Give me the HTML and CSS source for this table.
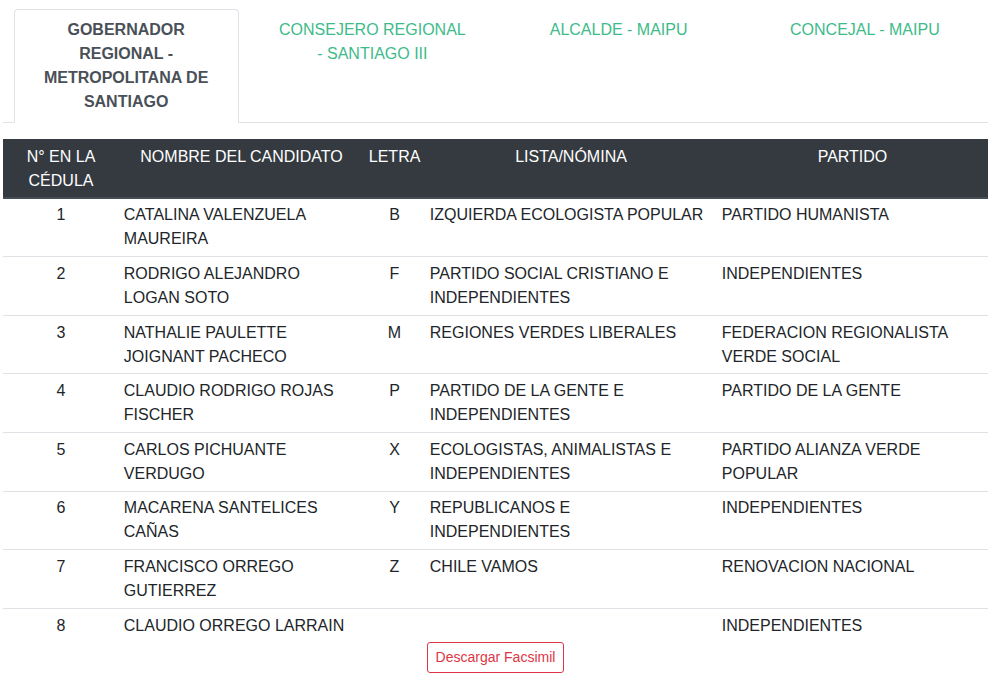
FILE: index.html
```html
<!DOCTYPE html>
<html lang="es">
<head>
<meta charset="utf-8">
<title>Candidatos</title>
<link rel="stylesheet" href="styles.css">
</head>
<body>
<div class="wrap">
  <ul class="tabs">
    <li class="tab-item"><a class="tab active">GOBERNADOR REGIONAL - METROPOLITANA DE SANTIAGO</a></li>
    <li class="tab-item"><a class="tab">CONSEJERO REGIONAL - SANTIAGO III</a></li>
    <li class="tab-item"><a class="tab">ALCALDE - MAIPU</a></li>
    <li class="tab-item"><a class="tab">CONCEJAL - MAIPU</a></li>
  </ul>
  <div class="content">
    <table class="grid">
      <colgroup>
        <col class="c1"><col class="c2"><col class="c3"><col class="c4"><col class="c5">
      </colgroup>
      <thead>
        <tr>
          <th>N° EN LA CÉDULA</th>
          <th>NOMBRE DEL CANDIDATO</th>
          <th>LETRA</th>
          <th>LISTA/NÓMINA</th>
          <th>PARTIDO</th>
        </tr>
      </thead>
      <tbody>
        <tr><td class="center">1</td><td>CATALINA VALENZUELA MAUREIRA</td><td class="center">B</td><td>IZQUIERDA ECOLOGISTA POPULAR</td><td>PARTIDO HUMANISTA</td></tr>
        <tr><td class="center">2</td><td>RODRIGO ALEJANDRO LOGAN SOTO</td><td class="center">F</td><td>PARTIDO SOCIAL CRISTIANO E INDEPENDIENTES</td><td>INDEPENDIENTES</td></tr>
        <tr><td class="center">3</td><td>NATHALIE PAULETTE JOIGNANT PACHECO</td><td class="center">M</td><td>REGIONES VERDES LIBERALES</td><td>FEDERACION REGIONALISTA VERDE SOCIAL</td></tr>
        <tr><td class="center">4</td><td>CLAUDIO RODRIGO ROJAS FISCHER</td><td class="center">P</td><td>PARTIDO DE LA GENTE E INDEPENDIENTES</td><td>PARTIDO DE LA GENTE</td></tr>
        <tr><td class="center">5</td><td>CARLOS PICHUANTE VERDUGO</td><td class="center">X</td><td>ECOLOGISTAS, ANIMALISTAS E INDEPENDIENTES</td><td>PARTIDO ALIANZA VERDE POPULAR</td></tr>
        <tr><td class="center">6</td><td>MACARENA SANTELICES CAÑAS</td><td class="center">Y</td><td>REPUBLICANOS E INDEPENDIENTES</td><td>INDEPENDIENTES</td></tr>
        <tr><td class="center">7</td><td>FRANCISCO ORREGO GUTIERREZ</td><td class="center">Z</td><td>CHILE VAMOS</td><td>RENOVACION NACIONAL</td></tr>
        <tr><td class="center">8</td><td>CLAUDIO ORREGO LARRAIN</td><td class="center"></td><td></td><td>INDEPENDIENTES</td></tr>
      </tbody>
    </table>
    <div class="actions">
      <button class="btn-outline" type="button">Descargar Facsimil</button>
    </div>
  </div>
</div>
</body>
</html>
```

FILE: styles.css
```css
* { box-sizing: border-box; }

html, body {
  margin: 0;
  padding: 0;
  background: #fff;
}

body {
  font-family: "Liberation Sans", Arial, sans-serif;
  font-size: 16px;
  line-height: 24px;
  color: #212529;
}

.wrap {
  width: 985px;
  margin-left: 3px;
  padding-top: 9px;
}

.tabs {
  list-style: none;
  margin: 0;
  padding: 0;
  display: flex;
  border-bottom: 1px solid #dee2e6;
}

.tab-item {
  flex: 1 1 0;
  display: flex;
  justify-content: center;
  margin-bottom: -1px;
}

.tab {
  display: block;
  width: 225px;
  padding: 8px 16px;
  text-align: center;
  color: #3dbb8a;
  border: 1px solid transparent;
  border-top-left-radius: 4px;
  border-top-right-radius: 4px;
  cursor: pointer;
}

.tab.active {
  color: #495057;
  font-weight: bold;
  background: #fff;
  border-color: #dee2e6 #dee2e6 #fff;
}

.content {
  padding-top: 16px;
}

.grid {
  width: 100%;
  table-layout: fixed;
  border-collapse: collapse;
}

.c1 { width: 116px; }
.c2 { width: 245px; }
.c3 { width: 61px; }
.c4 { width: 292px; }
.c5 { width: 271px; }

.grid th {
  background: #343a40;
  color: #fff;
  font-weight: normal;
  text-align: center;
  vertical-align: top;
  padding: 5.6px 4.8px 4px;
  border-bottom: 2px solid #454d55;
}

.grid td {
  padding: 4.8px;
  vertical-align: top;
  text-align: left;
  border-top: 1px solid #dee2e6;
}

.grid td.center { text-align: center; }

.actions {
  display: flex;
  justify-content: center;
}

.btn-outline {
  font-family: "Liberation Sans", Arial, sans-serif;
  font-size: 14px;
  line-height: 21px;
  padding: 4px 8px;
  color: #dc3545;
  background: #fff;
  border: 1px solid #dc3545;
  border-radius: 3px;
  cursor: pointer;
}
```
